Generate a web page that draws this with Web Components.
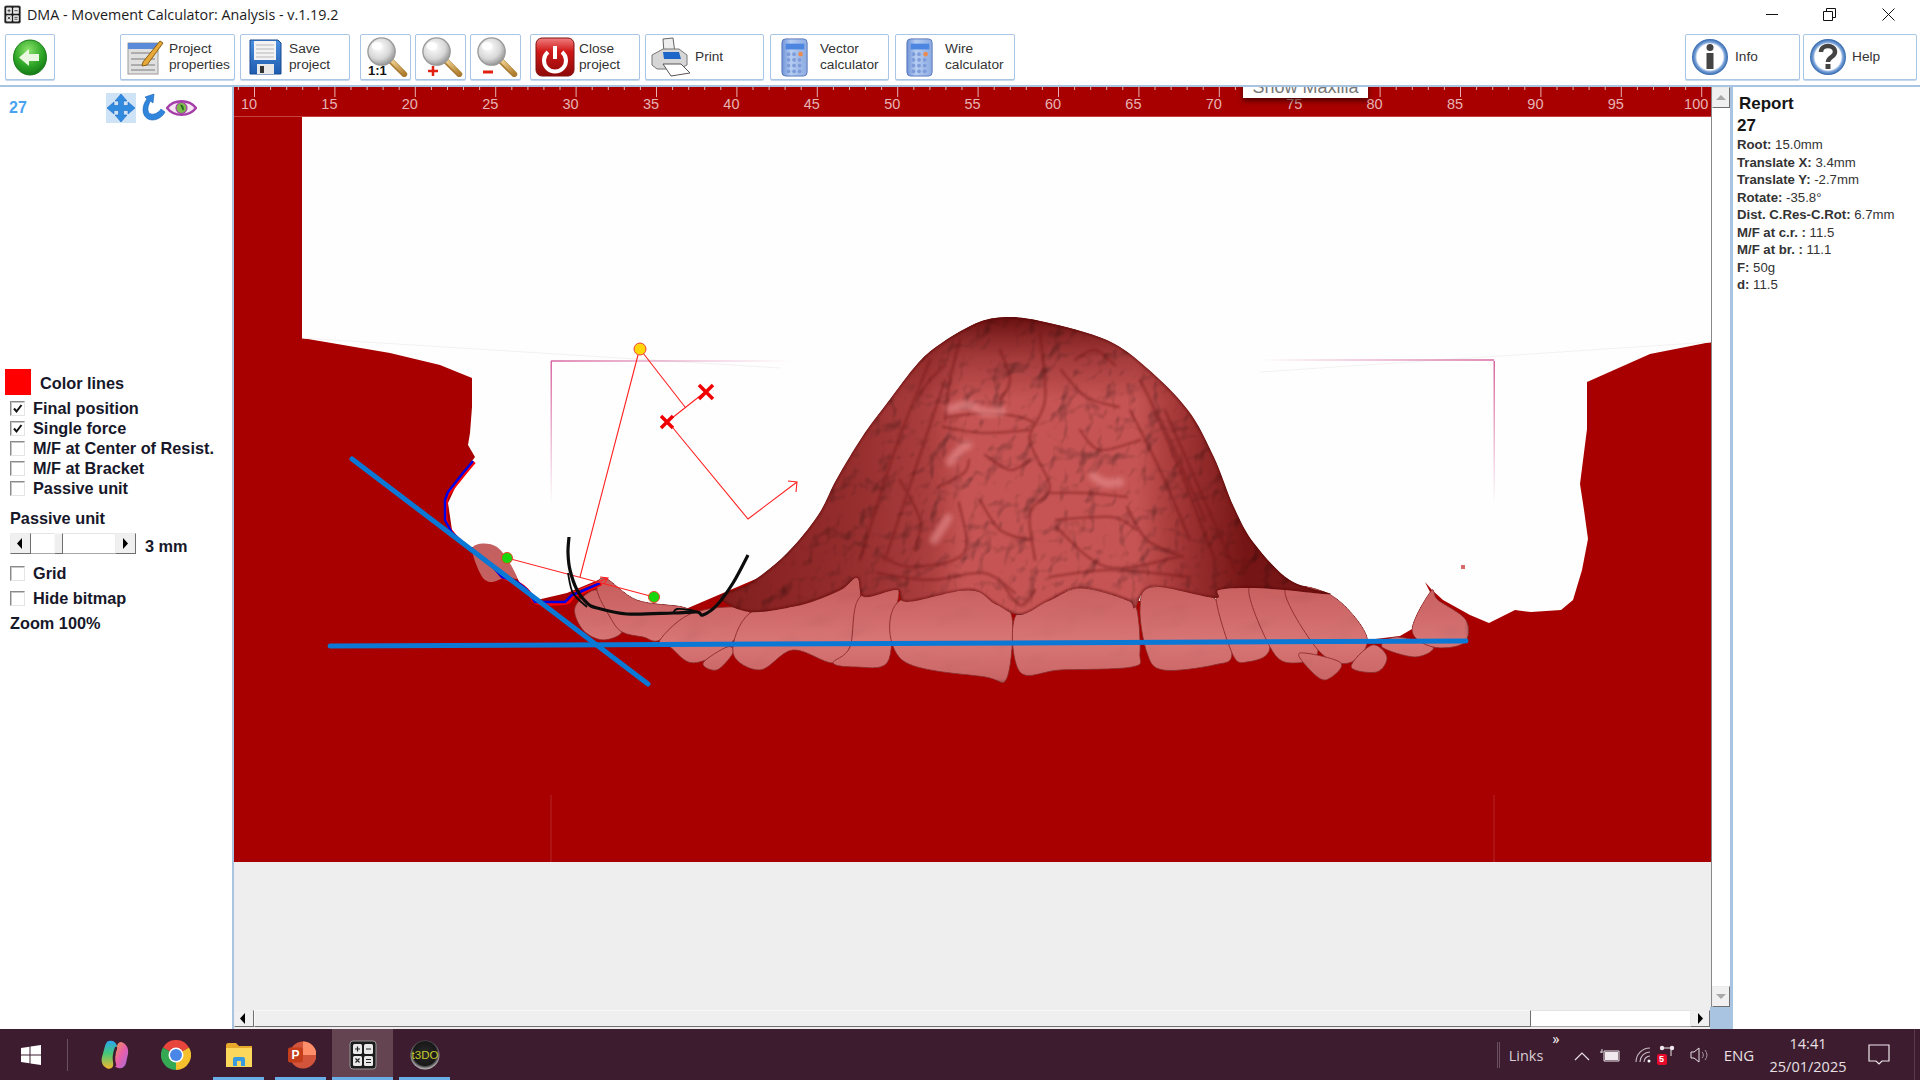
<!DOCTYPE html>
<html lang="en">
<head>
<meta charset="utf-8">
<title>DMA - Movement Calculator</title>
<style>
  html, body { margin: 0; height: 100%; overflow: hidden; background: #fff; }
  body { display: flex; flex-direction: column; width: 1920px; height: 1080px; font-family: "Liberation Sans", Arial, sans-serif; }
  svg { display: block; }
</style>
</head>
<body>
<svg width="0" height="0" style="position:absolute">
  <defs>
    <radialGradient id="glass" cx=".4" cy=".35" r=".7"><stop offset="0" stop-color="#fff"/><stop offset=".6" stop-color="#d8d8d8"/><stop offset="1" stop-color="#8c8c8c"/></radialGradient>
    <linearGradient id="handle" x1="0" y1="0" x2="1" y2="1"><stop offset="0" stop-color="#f0d090"/><stop offset="1" stop-color="#b08030"/></linearGradient>
    <radialGradient id="orb" cx=".45" cy=".3" r=".8"><stop offset="0" stop-color="#8be36a"/><stop offset=".55" stop-color="#2da526"/><stop offset="1" stop-color="#0b6a10"/></radialGradient>
    <linearGradient id="pwr" x1="0" y1="0" x2="0" y2="1"><stop offset="0" stop-color="#f08080"/><stop offset=".35" stop-color="#d01818"/><stop offset="1" stop-color="#8e0808"/></linearGradient>
    <linearGradient id="calc" x1="0" y1="0" x2="1" y2="0"><stop offset="0" stop-color="#6f93d8"/><stop offset=".35" stop-color="#b6cdf2"/><stop offset="1" stop-color="#8cabe2"/></linearGradient>
    <radialGradient id="ring" cx=".5" cy=".5" r=".5"><stop offset=".72" stop-color="#fff"/><stop offset=".82" stop-color="#7fa6da"/><stop offset="1" stop-color="#2f66ad"/></radialGradient>
    <linearGradient id="floppy" x1="0" y1="0" x2="0" y2="1"><stop offset="0" stop-color="#4a8fe0"/><stop offset="1" stop-color="#1e5cb0"/></linearGradient>
    <linearGradient id="copiL" x1="0" y1="0" x2="0" y2="1"><stop offset="0" stop-color="#2aa6ee"/><stop offset=".45" stop-color="#45c878"/><stop offset="1" stop-color="#f6b62c"/></linearGradient>
    <linearGradient id="copiR" x1="0" y1="0" x2="1" y2="1"><stop offset="0" stop-color="#f2a040"/><stop offset=".5" stop-color="#e85fa8"/><stop offset="1" stop-color="#a46be0"/></linearGradient>
    <radialGradient id="sphere" cx=".5" cy=".45" r=".55"><stop offset="0" stop-color="#2a2a2a"/><stop offset=".75" stop-color="#181818"/><stop offset=".9" stop-color="#8c8c8c"/><stop offset="1" stop-color="#c4c4c4"/></radialGradient>
    <symbol id="magnifier" viewBox="0 0 50 44">
      <path d="M29 26 L44 41" stroke="#a87a30" stroke-width="6.500" stroke-linecap="round"/>
      <path d="M30 26 L44 40" stroke="url(#handle)" stroke-width="4.500" stroke-linecap="round"/>
      <circle cx="19" cy="16" r="15" fill="url(#glass)" stroke="#9a9a9a" stroke-width="1.500"/>
      <ellipse cx="14" cy="10" rx="6" ry="4.500" fill="#fff" opacity=".9"/>
    </symbol>
    <symbol id="calculator" viewBox="0 0 30 42">
      <rect x="1" y="2" width="27" height="39" rx="4" fill="url(#calc)" stroke="#5676b8"/>
      <rect x="5" y="7" width="20" height="6" fill="#4d86e0"/>
      <g fill="#7d9bd8">
        <circle cx="8" cy="18" r="2"/><circle cx="14" cy="18" r="2"/><circle cx="8" cy="24" r="2"/><circle cx="14" cy="24" r="2"/><circle cx="20" cy="24" r="2"/><circle cx="8" cy="30" r="2"/><circle cx="14" cy="30" r="2"/><circle cx="20" cy="30" r="2"/><circle cx="8" cy="36" r="2"/><circle cx="14" cy="36" r="2"/><circle cx="20" cy="36" r="2"/>
      </g>
      <circle cx="21" cy="18" r="2.400" fill="#ec8a50"/>
    </symbol>
    <symbol id="calc-dark" viewBox="0 0 28 30">
      <rect x="1" y="1" width="26" height="28" rx="3" fill="#1b1b1b" stroke="#9a9a9a"/>
      <rect x="4" y="4" width="9" height="10" rx="1.500" fill="#e8e8e8"/><rect x="15" y="4" width="9" height="10" rx="1.500" fill="#e8e8e8"/>
      <rect x="4" y="16" width="9" height="10" rx="1.500" fill="#e8e8e8"/><rect x="15" y="16" width="9" height="10" rx="1.500" fill="#e8e8e8"/>
      <path d="M6 9h5M8.500 6.500v5M17 9h5M6.500 18.500l4 4M10.500 18.500l-4 4M17 19.500h5M17 22.500h5" stroke="#222" stroke-width="1.200"/>
    </symbol>
  </defs>
</svg>

<template id="tool-button-tpl">
  <style>
    :host { display: flex; align-items: center; box-sizing: border-box; height: 46px; padding-left: var(--pad, 5px); gap: var(--gap, 4px);
      background: #fff; border: 1px solid #a9c6e6; border-radius: 2px; box-shadow: 0 1px 0 #c6d8ec; color: #333;
      font: 13.700px/16px "Liberation Sans", Arial, sans-serif; flex: none; }
    ::slotted(svg) { flex: none; }
  </style>
  <slot name="icon"></slot><span><slot></slot></span>
</template>

<template id="check-row-tpl">
  <style>
    :host { display: flex; align-items: center; height: 20px; gap: 8px; padding-left: 10px; }
    i { box-sizing: border-box; width: 15px; height: 15px; flex: none; background: #fff; border: 1px solid; border-color: #8a8a8a #e4e4e4 #e4e4e4 #8a8a8a; box-shadow: inset 1px 1px 0 #c8c8c8; display: block; }
    svg { display: block; }
  </style>
  <i></i><span><slot></slot></span>
</template>

<template id="scroll-bar-tpl">
  <style>
    :host { display: flex; flex: none; background: #fff; box-sizing: border-box; }
    :host([dir-y]) { flex-direction: column; }
    .arrow { flex: none; display: flex; align-items: center; justify-content: center; background: #f0f0f0; box-sizing: border-box;
      border: 1px solid; border-color: #ececec #6f6f6f #6f6f6f #ececec; }
    .track { flex: 1 1 0; background: #fff; min-width: 0; min-height: 0; box-sizing: border-box; }
    :host(:not([dir-y])) .track { border-top: 1px solid #e4e4e4; border-bottom: 1px solid #a8a8a8; }
    .thumb { flex: none; background: #efefef; box-sizing: border-box; border: 1px solid; border-color: #f8f8f8 #6f6f6f #6f6f6f #f8f8f8; }
  </style>
  <div class="arrow a"></div><div class="track before"></div><div class="thumb"></div><div class="track after"></div><div class="arrow b"></div>
</template>

<template id="ruler-bar-tpl">
  <style>
    :host { display: block; height: 30px; background: #a80000; overflow: hidden; position: relative; flex: none; border-bottom: 1px solid #c84040; box-sizing: border-box; }
    text { font: 14.500px "Liberation Sans", Arial, sans-serif; fill: #e6b4b4; }
    .pop { position: absolute; left: 1009px; top: -9px; width: 125px; height: 20px; background: #fff; box-shadow: 0 3px 5px rgba(40,0,0,.7); color: #777; font: 18px/18px "Liberation Sans", Arial, sans-serif; text-align: center; white-space: nowrap; }
  </style>
  <svg width="1477" height="30"></svg>
  <div class="pop">Show Maxilla</div>
</template>

<template id="report-panel-tpl">
  <style>
    :host { display: block; box-sizing: border-box; padding: 7px 0 0 4px; background: #fff; color: #333; font: 13.200px/17.550px "Liberation Sans", Arial, sans-serif; }
    h2 { margin: 0 0 0 2px; font: bold 17px/20px "Liberation Sans", Arial, sans-serif; color: #151515; }
    h3 { margin: 2px 0 0; font: bold 17px/20px "Liberation Sans", Arial, sans-serif; color: #151515; }
    ::slotted(div) { white-space: nowrap; }
  </style>
  <h2>Report</h2><h3>27</h3><slot></slot>
</template>

<script>
class ToolButton extends HTMLElement {
  constructor() {
    super();
    this.attachShadow({ mode: "open" }).appendChild(document.getElementById("tool-button-tpl").content.cloneNode(true));
  }
}
customElements.define("tool-button", ToolButton);

class CheckRow extends HTMLElement {
  constructor() {
    super();
    this.attachShadow({ mode: "open" }).appendChild(document.getElementById("check-row-tpl").content.cloneNode(true));
  }
  connectedCallback() {
    if (this.hasAttribute("checked")) {
      this.shadowRoot.querySelector("i").innerHTML =
        '<svg width="13" height="13" viewBox="0 0 13 13"><path d="M3 6.500 L5.500 9.500 L10.500 3" fill="none" stroke="#111" stroke-width="2"/></svg>';
    }
  }
}
customElements.define("check-row", CheckRow);

class ScrollBar extends HTMLElement {
  constructor() {
    super();
    this.attachShadow({ mode: "open" }).appendChild(document.getElementById("scroll-bar-tpl").content.cloneNode(true));
  }
  connectedCallback() {
    const root = this.shadowRoot;
    const vertical = this.hasAttribute("dir-y");
    const size = Number(this.getAttribute("arrow") || 20);
    const thumb = root.querySelector(".thumb");
    const box = vertical ? "height" : "width";
    root.querySelectorAll(".arrow").forEach((a) => {
      a.style[box] = size + "px";
    });
    if (this.hasAttribute("thumb")) {
      const [before, len] = this.getAttribute("thumb").split(",").map(Number);
      root.querySelector(".before").style.flex = `0 0 ${before}px`;
      thumb.style[box] = len + "px";
    } else {
      thumb.style.display = "none";
      root.querySelector(".before").style.display = "none";
    }
    const fill = this.hasAttribute("disabled") ? "#a8a8a8" : "#000";
    const tri = vertical
      ? ['<path d="M1 6 L6 1 L11 6Z"/>', '<path d="M1 1 L11 1 L6 6Z"/>']
      : ['<path d="M6 0 L1 5.500 L6 11Z"/>', '<path d="M1 0 L6 5.500 L1 11Z"/>'];
    const w = vertical ? 12 : 7, h = vertical ? 7 : 11;
    root.querySelector(".a").innerHTML = `<svg width="${w}" height="${h}" fill="${fill}" style="display:block">${tri[0]}</svg>`;
    root.querySelector(".b").innerHTML = `<svg width="${w}" height="${h}" fill="${fill}" style="display:block">${tri[1]}</svg>`;
    if (!vertical) root.querySelector(".a").style.paddingRight = "3px";
  }
}
customElements.define("scroll-bar", ScrollBar);

class RulerBar extends HTMLElement {
  constructor() {
    super();
    this.attachShadow({ mode: "open" }).appendChild(document.getElementById("ruler-bar-tpl").content.cloneNode(true));
  }
  connectedCallback() {
    let marks = "";
    // one unit is 16.08px, the 10 mark sits at x = 20 in the canvas
    for (let mm = 9; mm <= 101; mm++) {
      const x = 20 + (mm - 10) * 16.08;
      const major = mm % 5 === 0;
      marks += `<rect x="${x.toFixed(1)}" y="0" width="1" height="${major ? 10 : 3}" fill="#e6b0b0"/>`;
      if (major) marks += `<text x="${(x - 5).toFixed(1)}" y="22" text-anchor="middle">${mm}</text>`;
    }
    this.shadowRoot.querySelector("svg").innerHTML = marks;
  }
}
customElements.define("ruler-bar", RulerBar);

class ReportPanel extends HTMLElement {
  constructor() {
    super();
    this.attachShadow({ mode: "open" }).appendChild(document.getElementById("report-panel-tpl").content.cloneNode(true));
  }
}
customElements.define("report-panel", ReportPanel);

class TaskItem extends HTMLElement {
  constructor() {
    super();
    this.attachShadow({ mode: "open" }).innerHTML = `
      <style>
        :host { display: flex; align-items: center; justify-content: center; flex: none; box-sizing: border-box; height: 51px; position: relative; }
        :host([open])::after { content: ""; position: absolute; left: 0; right: 0; bottom: 0; height: 3px; background: #6aaee8; }
        :host([active]) { background: #644451; }
      </style>
      <slot></slot>`;
  }
}
customElements.define("task-item", TaskItem);

class WindowBar extends HTMLElement {
  constructor() {
    super();
    this.attachShadow({ mode: "open" }).innerHTML = `
      <style>
        :host { display: flex; align-items: center; height: 34px; flex: none; padding-left: 3px; background: #fff; color: #1b1b1b; font: 14.300px "Open Sans", "Liberation Sans", sans-serif; }
        span { margin-left: 5px; flex: 1; position: relative; top: -3px; }
        .ctl { width: 58px; display: flex; justify-content: center; position: relative; top: -3px; }
        svg { display: block; }
        ::slotted(svg) { position: relative; top: -3px; }
      </style>
      <slot name="icon"></slot><span><slot></slot></span>
      <div class="ctl"><svg width="12" height="12"><path d="M0 6.500H12" stroke="#111"/></svg></div>
      <div class="ctl" style="left:-1px"><svg width="13" height="13"><path d="M.5 3.500h9v9h-9zM3.500 3.500v-3h9v9h-3" fill="none" stroke="#111"/></svg></div>
      <div class="ctl" style="margin-right:3px"><svg width="13" height="13"><path d="M.5 .5L12.500 12.500M12.500 .5L.5 12.500" stroke="#111"/></svg></div>`;
  }
}
customElements.define("window-bar", WindowBar);

class SidePanel extends HTMLElement {
  constructor() {
    super();
    this.attachShadow({ mode: "open" }).innerHTML = `
      <style>
        :host { display: block; box-sizing: border-box; width: 232px; flex: none; background: #fff; color: #17172a; font: bold 16.300px "Liberation Sans", Arial, sans-serif; }
        .num { height: 282px; box-sizing: border-box; padding: 6px 0 0 9px; display: flex; align-items: flex-start; color: #4aa3f0; font: bold 16px/30px "Liberation Sans", Arial, sans-serif; }
      </style>
      <div class="num"><slot name="head"></slot></div>
      <slot></slot>`;
  }
}
customElements.define("side-panel", SidePanel);

// Catmull-Rom through the traced points, the outlines below were read off the reference
function curve(pts, closed = true) {
  const n = pts.length;
  const at = (i) => (closed ? pts[(i + n) % n] : pts[Math.max(0, Math.min(n - 1, i))]);
  let d = `M${pts[0][0]} ${pts[0][1]}`;
  for (let i = 0; i < (closed ? n : n - 1); i++) {
    const [p0, p1, p2, p3] = [at(i - 1), at(i), at(i + 1), at(i + 2)];
    const c1 = [p1[0] + (p2[0] - p0[0]) / 6, p1[1] + (p2[1] - p0[1]) / 6];
    const c2 = [p2[0] - (p3[0] - p1[0]) / 6, p2[1] - (p3[1] - p1[1]) / 6];
    d += `C${c1[0].toFixed(1)} ${c1[1].toFixed(1)} ${c2[0].toFixed(1)} ${c2[1].toFixed(1)} ${p2[0]} ${p2[1]}`;
  }
  return d + (closed ? "Z" : "");
}
const poly = (pts) => "M" + pts.map((p) => p.join(" ")).join("L");

const WHITE = [[302,117],[1711,117],[1711,342],[1650,354],[1587,382],[1587,429],[1580,484],[1584,510],[1588,539],[1582,570],[1573,600],[1561,610],[1531,612],[1515,610],[1489,623],[1470,615],[1443,600],[1432,590],[1425,582],[1430,592],[1424,622],[1400,636],[1367,640],[1300,620],[800,560],[660,620],[620,600],[603,578],[567,593],[537,600],[520,583],[507,560],[487,547],[467,547],[452,530],[448,503],[460,477],[475,457],[468,445],[470,433],[472,407],[472,378],[440,365],[390,353],[302,338]];

const PALATE = [[720,597],[750,583],[787,553],[818,515],[836,480],[862,437],[887,403],[918,363],[943,342],[979,322],[1010,317],[1045,322],[1107,340],[1147,368],[1188,410],[1214,457],[1234,507],[1254,543],[1290,580],[1331,594],[1285,590],[1249,588],[1219,590],[1214,598],[1152,587],[1135,608],[1127,600],[1081,588],[1050,600],[1020,615],[994,603],[969,590],[907,602],[897,590],[864,597],[857,578],[840,590],[800,605],[750,612]];

const TEETH = [
  [[575,607],[597,590],[610,617],[622,632],[603,640],[583,630]],
  [[597,590],[605,578],[637,600],[683,607],[688,615],[660,640],[643,637],[622,632],[610,617]],
  [[660,640],[670,647],[693,663],[727,647],[750,613],[727,607],[688,615]],
  [[703,663],[727,647],[733,653],[717,670]],
  [[733,653],[750,613],[800,605],[840,590],[857,577],[860,600],[850,647],[833,663],[793,650],[760,670]],
  [[850,647],[859,598],[897,588],[893,620],[887,663],[856,667],[833,663]],
  [[897,603],[969,590],[994,603],[1012,617],[1007,678],[985,677],[902,660]],
  [[1015,617],[1050,600],[1081,588],[1127,600],[1137,610],[1140,653],[1132,667],[1061,670],[1020,672]],
  [[1140,608],[1152,587],[1214,598],[1232,653],[1214,665],[1163,670],[1147,653]],
  [[1216,590],[1249,588],[1270,647],[1247,662],[1232,653]],
  [[1249,588],[1285,590],[1318,650],[1290,663],[1270,647]],
  [[1285,590],[1331,595],[1367,637],[1349,663],[1318,650]],
  [[1300,653],[1341,663],[1326,680],[1310,670]],
  [[1372,645],[1387,657],[1377,672],[1351,667]],
  [[1397,637],[1433,647],[1415,657],[1382,647]],
  [[1431,591],[1438,600],[1466,620],[1464,643],[1433,647],[1412,630]],
];

const RIDGES_DARK = [
  [[948,417],[984,413],[1020,417],[1035,423]], [[1061,370],[1086,397],[1119,407]],
  [[1040,333],[1045,400],[1030,440],[1050,487],[1030,513],[1035,560]],
  [[938,487],[964,473],[969,460]], [[943,427],[984,433],[1030,430]],
  [[1050,493],[1086,493],[1127,497]], [[1056,520],[1112,517],[1137,530]],
  [[1127,507],[1147,540],[1183,557]], [[882,557],[913,567],[964,553],[959,503]],
  [[1056,527],[1107,567],[1178,557]], [[877,573],[930,580],[984,573],[1015,593]],
  [[1050,577],[1112,570],[1188,577]], [[915,400],[930,380],[945,365]],
  [[1000,350],[1010,380],[1000,400]], [[1075,360],[1095,350],[1115,365]],
  [[985,455],[1010,470],[1030,460]], [[980,500],[1000,530],[1030,540]],
  [[1080,430],[1100,450],[1140,440]], [[900,480],[920,520],[915,550]],
  [[1130,410],[1160,470],[1190,540]], [[1150,400],[1180,470],[1215,560]],
  [[1165,410],[1200,490],[1235,570]], [[930,360],[895,450],[860,560]],
  [[945,380],[915,470],[885,560]], [[1000,580],[1020,605],[1035,590]],
  [[1140,380],[1170,440],[1205,520]], [[960,340],[950,380],[945,420]],
];
const RIDGES_LIGHT = [
  [[950,409],[968,405],[985,412],[1002,411]], [[950,462],[960,450],[968,445]],
  [[1093,476],[1105,483],[1120,482]], [[934,540],[942,528],[948,518]],
];

class DentalCanvas extends HTMLElement {
  connectedCallback() {
    const root = this.attachShadow({ mode: "open" });
    const teeth = TEETH.map((t) => `<path d="${curve(t)}"/>`).join("");
    const dark = RIDGES_DARK.map((r) => `<path d="${curve(r, false)}"/>`).join("");
    const light = RIDGES_LIGHT.map((r) => `<path d="${curve(r, false)}"/>`).join("");
    const blue = [[473,461],[463,473],[448,492],[445,500],[445,520],[452,533],[463,543],[480,557],[493,567],[502,577],[517,582],[527,590],[535,602],[565,602],[572,595],[580,592],[600,583]];
    const bite1 = [[569,537],[568,553],[570,570],[577,590],[587,603],[597,608],[627,614],[673,613],[697,612],[703,615],[717,605],[733,583],[748,555]];
    const bite2 = [[568,573],[573,593],[587,607]];
    const bite3 = [[673,613],[677,609],[690,610],[697,612]];
    root.innerHTML = `
      <style>
        :host { display: block; width: 1477px; height: 745px; flex: none; background: #a80000; overflow: hidden; }
        svg { display: block; }
      </style>
      <svg width="1477" height="745" viewBox="234 117 1477 745">
        <defs>
          <filter id="relief" x="0" y="0" width="1" height="1" color-interpolation-filters="sRGB">
            <feTurbulence type="fractalNoise" baseFrequency="0.045 0.035" numOctaves="3" seed="11" result="n"/>
            <feGaussianBlur in="n" stdDeviation="1.200" result="nb"/>
            <feDiffuseLighting in="nb" surfaceScale="5" diffuseConstant="1.100" lighting-color="#fff" result="l"><feDistantLight azimuth="235" elevation="68"/></feDiffuseLighting>
            <feComposite in="SourceGraphic" in2="l" operator="arithmetic" k1="1.050" k2="0" k3="0" k4="0" result="m"/>
            <feComposite in="m" in2="SourceAlpha" operator="in"/>
          </filter>
          <filter id="soft" x="0" y="0" width="1" height="1" color-interpolation-filters="sRGB">
            <feTurbulence type="fractalNoise" baseFrequency="0.02 0.03" numOctaves="2" seed="4" result="n"/>
            <feGaussianBlur in="n" stdDeviation="2" result="nb"/>
            <feDiffuseLighting in="nb" surfaceScale="1.800" diffuseConstant="1.070" lighting-color="#fff" result="l"><feDistantLight azimuth="225" elevation="70"/></feDiffuseLighting>
            <feComposite in="SourceGraphic" in2="l" operator="arithmetic" k1="1.030" k2="0" k3="0" k4="0" result="m"/>
            <feComposite in="m" in2="SourceAlpha" operator="in"/>
          </filter>
          <filter id="b1"><feGaussianBlur stdDeviation="1.200"/></filter>
          <filter id="b3"><feGaussianBlur stdDeviation="2.500"/></filter>
          <linearGradient id="pal" gradientUnits="userSpaceOnUse" x1="720" y1="0" x2="1331" y2="0">
            <stop offset="0" stop-color="#7c1c1c"/><stop offset=".2" stop-color="#8d2a2a"/><stop offset=".34" stop-color="#a23a3a"/><stop offset=".4" stop-color="#bd5050"/><stop offset=".68" stop-color="#bd5050"/><stop offset=".75" stop-color="#9c3434"/><stop offset=".86" stop-color="#701414"/><stop offset="1" stop-color="#721616"/>
          </linearGradient>
          <linearGradient id="palTop" gradientUnits="userSpaceOnUse" x1="0" y1="317" x2="0" y2="400">
            <stop offset="0" stop-color="#5a0808" stop-opacity=".9"/><stop offset=".5" stop-color="#6e1414" stop-opacity=".4"/><stop offset="1" stop-color="#6e1414" stop-opacity="0"/>
          </linearGradient>
          <linearGradient id="tooth" gradientUnits="userSpaceOnUse" x1="0" y1="585" x2="0" y2="680">
            <stop offset="0" stop-color="#c25c5c"/><stop offset=".6" stop-color="#d27272"/><stop offset="1" stop-color="#c46262"/>
          </linearGradient>
          <linearGradient id="pinkL" gradientUnits="userSpaceOnUse" x1="551" y1="0" x2="790" y2="0"><stop offset="0" stop-color="#d868a0"/><stop offset="1" stop-color="#d868a0" stop-opacity="0"/></linearGradient>
          <linearGradient id="pinkR" gradientUnits="userSpaceOnUse" x1="1494" y1="0" x2="1260" y2="0"><stop offset="0" stop-color="#d868a0"/><stop offset="1" stop-color="#d868a0" stop-opacity="0"/></linearGradient>
          <linearGradient id="pinkV" gradientUnits="userSpaceOnUse" x1="0" y1="361" x2="0" y2="504"><stop offset="0" stop-color="#d868a0"/><stop offset="1" stop-color="#d868a0" stop-opacity="0"/></linearGradient>
          <clipPath id="palClip"><path d="${curve(PALATE)}"/></clipPath>
        </defs>
        <path d="${poly(WHITE)}Z" fill="#fefefe"/>
        <path d="M302 338 L780 368 M1260 372 L1711 342" stroke="#f2f2f2" stroke-width="1" fill="none"/>
        <path d="${poly([[551,361],[790,361]])}" stroke="url(#pinkL)" stroke-width="1.500"/>
        <path d="${poly([[1260,360],[1494,360]])}" stroke="url(#pinkR)" stroke-width="1.500"/>
        <rect x="550.500" y="361" width="1.500" height="143" fill="url(#pinkV)"/>
        <rect x="1493.500" y="361" width="1.500" height="143" fill="url(#pinkV)"/>
        <path d="M551 795V862M1494 795V862" stroke="#c85050" stroke-width="1" opacity=".45"/>

        <path d="${curve([[473,547],[497,547],[517,577],[507,577],[490,582],[480,573]])}" fill="#c46060"/>
        <g filter="url(#soft)" fill="url(#tooth)" stroke="#8f3030" stroke-width="1">${teeth}</g>

        <g filter="url(#relief)"><path d="${curve(PALATE)}" fill="url(#pal)"/><path d="${curve(PALATE)}" fill="url(#palTop)"/></g>
        <g clip-path="url(#palClip)">
          <g fill="none" stroke="#6e1414" stroke-width="2.500" stroke-linecap="round" opacity=".4" filter="url(#b1)">${dark}</g>
          <g fill="none" stroke="#e89090" stroke-width="9" stroke-linecap="round" opacity=".6" filter="url(#b3)">${light}</g>
          <path d="${curve(PALATE)}" fill="none" stroke="#5a0606" stroke-width="3" opacity=".5" filter="url(#b1)"/>
        </g>
        <rect x="1461" y="565" width="4" height="4" fill="#d66a6a"/>

        <!-- traced movement lines -->
        <path d="${curve(blue.map(([x, y]) => [x + 1.5, y + 1]), false)}" fill="none" stroke="#ff0000" stroke-width="3"/>
        <path d="${poly(blue)}" fill="none" stroke="#0000e6" stroke-width="2.500" stroke-linejoin="round"/>
        <g fill="none" stroke="#0a78d4" stroke-width="5" stroke-linecap="round">
          <path d="M352 459L648 684"/>
          <path d="M330 646L1466 641"/>
        </g>
        <g fill="none" stroke="#ff2020" stroke-width="1.100">
          <path d="M638 355L580 577M643 353L685 407M705 392L667 422M673 428L748 519L797 482M788 481L797 482L796 492"/>
          <path d="M507 558L654 597M573 592L608 578M600 577L608 578L604 584"/>
        </g>
        <g stroke="#f00000" stroke-width="3.500" fill="none">
          <path d="M699 385L713 399M713 385L699 399"/>
          <path d="M661 416L673 428M673 416L661 428"/>
        </g>
        <g fill="none" stroke="#0c0c0c" stroke-width="3.200" stroke-linejoin="round">
          <path d="${curve(bite1, false)}"/>
          <path d="${curve(bite2, false)}" stroke-width="1.800"/>
          <path d="${curve(bite3, false)}" stroke-width="1.800"/>
        </g>
        <circle cx="640" cy="349" r="6" fill="#ffd60a" stroke="#f04030"/>
        <circle cx="507" cy="558" r="5.500" fill="#18d80c" stroke="#f04030"/>
        <circle cx="654" cy="597" r="5.500" fill="#18d80c" stroke="#f04030"/>
      </svg>`;
  }
}
customElements.define("dental-canvas", DentalCanvas);

class TaskBar extends HTMLElement {
  constructor() {
    super();
    this.attachShadow({ mode: "open" }).innerHTML = `
      <style>
        :host { display: flex; align-items: center; height: 51px; flex: none; background: #3d1c2f; color: #e8e0e4; font: 14.500px "Open Sans", "Liberation Sans", sans-serif; }
        .apps, .tray { display: flex; align-items: center; height: 100%; }
        .tray { margin-left: auto; }
      </style>
      <div class="apps"><slot name="apps"></slot></div>
      <div class="tray"><slot name="tray"></slot></div>`;
  }
}
customElements.define("task-bar", TaskBar);
</script>

<window-bar>
  <svg slot="icon" width="19" height="19" viewBox="0 0 28 30"><use href="#calc-dark"/></svg>
  DMA - Movement Calculator: Analysis - v.1.19.2
</window-bar>

<div style="display:flex;height:51px;flex:none;padding-left:5px;background:#fff;box-sizing:border-box">
  <tool-button style="width:50px;--pad:6px">
    <svg slot="icon" width="36" height="37" viewBox="0 0 36 37"><ellipse cx="18" cy="18.500" rx="16.500" ry="17.500" fill="url(#orb)" stroke="#1a7a1a"/><path d="M7 18.500L17 10V15H27V22H17V27Z" fill="#e9f8df"/></svg>
  </tool-button>
  <tool-button style="width:115px;margin-left:65px;--pad:6px;--gap:4px">
    <svg slot="icon" width="38" height="35" viewBox="0 0 38 35"><rect x="1" y="3" width="30" height="31" fill="#e0e0e0" stroke="#9a9a9a"/><rect x="1" y="3" width="30" height="6" fill="#5b8ad8"/><path d="M4 13h24M4 19h24M4 25h24M4 30h24" stroke="#9c9c9c" stroke-width="1.500"/><path d="M16 22L33 1L36 3L20 25L15 26Z" fill="#e6a93a" stroke="#8a6010"/></svg>
    Project<br>properties
  </tool-button>
  <tool-button style="width:110px;margin-left:5px;--pad:7px;--gap:7px">
    <svg slot="icon" width="34" height="36" viewBox="0 0 34 36"><path d="M2 1H30L33 4V35H2Z" fill="url(#floppy)" stroke="#17498f"/><rect x="6" y="2" width="22" height="19" fill="#f3f3f3"/><path d="M8 6h18M8 10h18M8 14h18M8 18h18" stroke="#b8b8b8"/><rect x="9" y="25" width="17" height="10" fill="#e8e8e8"/><rect x="12" y="27" width="4" height="7" fill="#333"/></svg>
    Save<br>project
  </tool-button>
  <tool-button style="width:51px;margin-left:10px;--pad:3px">
    <span slot="icon" style="position:relative;display:block;width:46px;height:40px"><svg width="46" height="40"><use href="#magnifier"/></svg><b style="position:absolute;left:4px;top:27px;font:bold 13px/14px 'Liberation Sans',sans-serif;color:#111">1:1</b></span>
  </tool-button>
  <tool-button style="width:51px;margin-left:4px;--pad:3px">
    <span slot="icon" style="position:relative;display:block;width:46px;height:40px"><svg width="46" height="40"><use href="#magnifier"/><path d="M9 34H19M14 29V39" stroke="#e02010" stroke-width="2.500"/></svg></span>
  </tool-button>
  <tool-button style="width:51px;margin-left:4px;--pad:3px">
    <span slot="icon" style="position:relative;display:block;width:46px;height:40px"><svg width="46" height="40"><use href="#magnifier"/><path d="M9 35H19" stroke="#e02010" stroke-width="3"/></svg></span>
  </tool-button>
  <tool-button style="width:110px;margin-left:9px;--pad:4px;--gap:4px">
    <svg slot="icon" width="40" height="40" viewBox="0 0 40 40"><rect x="1" y="1" width="38" height="38" rx="6" fill="url(#pwr)" stroke="#801010"/><path d="M13 15A11 11 0 1 0 27 15" fill="none" stroke="#fff" stroke-width="4"/><path d="M20 9V22" stroke="#fff" stroke-width="4"/></svg>
    Close<br>project
  </tool-button>
  <tool-button style="width:119px;margin-left:5px;--pad:3px;--gap:4px">
    <svg slot="icon" width="42" height="40" viewBox="0 0 42 40"><path d="M14 2L24 1L26 16H15Z" fill="#eee" stroke="#666"/><path d="M3 18L14 12H30L38 18V28L30 32H8L3 28Z" fill="#d6d6d6" stroke="#777"/><path d="M14 15H30L32 22H15Z" fill="#1d67c8"/><path d="M14 27L32 27L41 36L22 39Z" fill="#fff" stroke="#555"/></svg>
    Print
  </tool-button>
  <tool-button style="width:119px;margin-left:6px;--pad:10px;--gap:11px">
    <svg slot="icon" width="28" height="40" viewBox="0 0 30 42" preserveAspectRatio="none"><use href="#calculator" width="30" height="42"/></svg>
    Vector<br>calculator
  </tool-button>
  <tool-button style="width:120px;margin-left:6px;--pad:10px;--gap:11px">
    <svg slot="icon" width="28" height="40" viewBox="0 0 30 42" preserveAspectRatio="none"><use href="#calculator" width="30" height="42"/></svg>
    Wire<br>calculator
  </tool-button>
  <tool-button style="width:115px;margin-left:auto;--pad:5px;--gap:6px">
    <svg slot="icon" width="38" height="38" viewBox="0 0 38 38"><circle cx="19" cy="19" r="18" fill="url(#ring)"/><circle cx="19" cy="9.500" r="3.500" fill="#444"/><rect x="15.500" y="15" width="7" height="16" fill="#444"/></svg>
    Info
  </tool-button>
  <tool-button style="width:114px;margin:0 3px;--pad:5px;--gap:5px">
    <svg slot="icon" width="38" height="38" viewBox="0 0 38 38"><circle cx="19" cy="19" r="18" fill="url(#ring)"/><path d="M12 14C12 6 26 6 26 14C26 19 19 19 19 24" fill="none" stroke="#444" stroke-width="4.500"/><rect x="16.500" y="26" width="5" height="5" fill="#444"/></svg>
    Help
  </tool-button>
</div>

<div style="height:2px;background:#a8c4e0;flex:none"></div>

<div style="display:flex;flex:1;min-height:0">
  <side-panel>
    <div slot="head" style="display:flex;align-items:center;height:30px;width:100%">
      <span style="width:97px">27</span>
      <span style="display:block;background:#cfe3f7;width:30px;height:30px">
        <svg width="30" height="30" viewBox="0 0 30 30"><path d="M15 1L21 8H17.500V12.500H22V9L29 15L22 21V17.500H17.500V22H21L15 29L9 22H12.500V17.500H8V21L1 15L8 9V12.500H12.500V8H9Z" fill="#2f8ae0" stroke="#1e6cc0" stroke-width=".6"/></svg>
      </span>
      <svg width="27" height="30" viewBox="0 0 27 30" style="margin-left:3px"><path d="M6 4L15 1L14 10L11.500 8C8 14 8 20 12 21C16 22 20 19 22 16L26 19C23 25 15 29 9 26C2 22 3 12 8 6Z" fill="#2f86dc" stroke="#1a62b0" stroke-width=".6"/></svg>
      <svg width="31" height="30" viewBox="0 0 31 30"><path d="M1 15C8 6 23 6 30 15C23 24 8 24 1 15Z" fill="#f6e6f4" stroke="#a63ea8" stroke-width="2.400"/><circle cx="15.500" cy="15" r="5.500" fill="#7dbb4a" stroke="#a63ea8" stroke-width="1.200"/><path d="M14 11.500A4 4 0 0 1 17 18Z" fill="#256a20"/></svg>
    </div>
    <div style="display:flex;align-items:center;gap:9px;padding-left:5px;height:26px">
      <span style="width:26px;height:26px;background:#ff0000;display:block"></span><span style="position:relative;top:1px">Color lines</span>
    </div>
    <check-row checked style="margin-top:3px">Final position</check-row>
    <check-row checked>Single force</check-row>
    <check-row>M/F at Center of Resist.</check-row>
    <check-row>M/F at Bracket</check-row>
    <check-row>Passive unit</check-row>
    <div style="padding-left:10px;height:20px;line-height:20px;margin-top:10px">Passive unit</div>
    <div style="display:flex;align-items:center;gap:9px;padding-left:10px;height:21px;margin-top:5px">
      <scroll-bar arrow="21" thumb="23,9" style="width:126px;height:21px"></scroll-bar><span style="position:relative;top:3px">3 mm</span>
    </div>
    <check-row style="margin-top:9px">Grid</check-row>
    <check-row style="margin-top:5px">Hide bitmap</check-row>
    <div style="padding-left:10px;height:20px;line-height:20px;margin-top:5px">Zoom 100%</div>
  </side-panel>
  <div style="width:2px;background:#a8c4e0;flex:none"></div>
  <div style="width:1496px;flex:none;display:flex;flex-direction:column">
    <div style="display:flex;height:920px;flex:none">
      <div style="width:1477px;display:flex;flex-direction:column;background:#eeeeee">
        <ruler-bar></ruler-bar>
        <dental-canvas></dental-canvas>
      </div>
      <scroll-bar dir-y disabled arrow="21" style="width:19px;height:920px;border-left:1px solid #888"></scroll-bar>
    </div>
    <div style="display:flex;height:22px;flex:none;background:#eeeeee">
      <scroll-bar arrow="20" thumb="0,1277" style="width:1476px;height:17px;margin-top:3px"></scroll-bar>
      <div style="flex:1;background:#a8c4e0"></div>
    </div>
  </div>
  <div style="width:3px;background:#a8c4e0;flex:none"></div>
  <report-panel style="flex:1">
    <div><b>Root:</b> 15.0mm</div>
    <div><b>Translate X:</b> 3.4mm</div>
    <div><b>Translate Y:</b> -2.7mm</div>
    <div><b>Rotate:</b> -35.8°</div>
    <div><b>Dist. C.Res-C.Rot:</b> 6.7mm</div>
    <div><b>M/F at c.r. :</b> 11.5</div>
    <div><b>M/F at br. :</b> 11.1</div>
    <div><b>F:</b> 50g</div>
    <div><b>d:</b> 11.5</div>
  </report-panel>
</div>

<task-bar>
  <task-item slot="apps" style="width:61px"><svg width="20" height="20" viewBox="0 0 20 20" fill="#fff"><path d="M0 3L8.500 1.800V9.500H0ZM9.500 1.600L20 0V9.500H9.500ZM0 10.500H8.500V18.200L0 17ZM9.500 10.500H20V20L9.500 18.400Z"/></svg></task-item>
  <div slot="apps" style="width:1px;height:32px;margin-left:6px;background:#6a5060;flex:none"></div>
  <task-item slot="apps" style="width:93px"><svg width="30" height="30" viewBox="0 0 30 30"><path d="M9 1C13 0 16 2 17 6L13 26C12 29 8 30 5 27C2 25 1 21 2 17L5 6C6 3 7 1 9 1Z" fill="url(#copiL)"/><path d="M21 2C26 3 29 8 28 14L26 23C25 27 22 29 18 28C15 27 13 25 14 22L17 6C18 3 19 2 21 2Z" fill="url(#copiR)"/><path d="M16 8C14 13 13 19 15 25" fill="none" stroke="#3d1c2f" stroke-width="2.500" stroke-linecap="round"/></svg></task-item>
  <task-item slot="apps" style="width:30px"><svg width="30" height="30" viewBox="0 0 30 30"><path d="M15 15L2 7.500A15 15 0 0 1 28 7.500Z" fill="#e8453c"/><path d="M15 15L28 7.500A15 15 0 0 1 15 30Z" fill="#f5c02c"/><path d="M15 15L15 30A15 15 0 0 1 2 7.500Z" fill="#34a853"/><circle cx="15" cy="15" r="7.500" fill="#fff"/><circle cx="15" cy="15" r="6" fill="#4a86e8"/></svg></task-item>
  <task-item slot="apps" open style="width:51px;margin-left:22px"><svg width="28" height="26" viewBox="0 0 28 26"><path d="M1 3C1 2 2 1 3 1H11L14 4H27V24H1Z" fill="#e6a92c"/><rect x="1" y="6" width="26" height="19" fill="#fbd75b"/><path d="M8 24V17A2 2 0 0 1 10 15H18A2 2 0 0 1 20 17V24H16V19H12V24Z" fill="#3a9ae0"/></svg></task-item>
  <task-item slot="apps" open style="width:51px;margin-left:11px"><svg width="30" height="30" viewBox="0 0 30 30"><circle cx="17" cy="15" r="13.500" fill="#d2543a"/><path d="M17 15V1.500A13.500 13.500 0 0 1 30.500 15Z" fill="#ff8f6b"/><rect x="2" y="7.500" width="15" height="15" rx="2" fill="#c43e1c"/><text x="5.500" y="19" font-family="Liberation Sans, sans-serif" font-weight="bold" font-size="12" fill="#fff">P</text></svg></task-item>
  <task-item slot="apps" open active style="width:61px;margin-left:6px"><svg width="28" height="30"><use href="#calc-dark"/></svg></task-item>
  <task-item slot="apps" open style="width:51px;margin-left:6px"><svg width="30" height="30" viewBox="0 0 30 30"><circle cx="15" cy="15" r="14.500" fill="url(#sphere)"/><text x="15" y="19" text-anchor="middle" font-family="Liberation Sans, sans-serif" font-size="11.500" fill="#c8c828">t3DO</text></svg></task-item>

  <div slot="tray" style="display:flex;align-items:center;height:100%">
    <div style="width:3px;height:26px;border-left:1px solid #6a5060;border-right:1px solid #6a5060;box-sizing:border-box;flex:none"></div>
    <span style="color:#d8cdd4;position:relative;top:1px;width:52px;text-align:center;flex:none">Links</span>
    <span style="width:8px;flex:none;display:block;align-self:flex-start;padding-top:3px;text-align:center;color:#fff;font-size:14px;line-height:14px">»</span>
    <svg width="16" height="9" viewBox="0 0 16 9" style="margin:3px 0 0 14px;flex:none"><path d="M1 8L8 1L15 8" fill="none" stroke="#e8e0e4" stroke-width="1.200"/></svg>
    <svg width="20" height="14" viewBox="0 0 20 14" style="margin-left:10px;flex:none"><path d="M0 4h2M2 1v4M4 3h15v10H4z" stroke="#f0e8ec" fill="none"/><rect x="5" y="4" width="13" height="8" fill="#f0e8ec"/></svg>
    <svg width="16" height="16" viewBox="0 0 16 16" style="margin-left:15px;flex:none"><g fill="none" stroke="#c8bcc4" stroke-width="1.100"><path d="M1 15A14 14 0 0 1 15 1"/><path d="M5 15A10 10 0 0 1 15 5"/><path d="M9 15A6 6 0 0 1 15 9"/></g><circle cx="14" cy="14" r="1.500" fill="#fff"/></svg>
    <span style="position:relative;display:block;width:20px;height:20px;margin-left:6px;flex:none"><svg width="20" height="20" viewBox="0 0 20 20"><circle cx="5" cy="3" r="2.200" fill="#f0e8ec"/><circle cx="15" cy="3" r="2.200" fill="#f0e8ec"/><path d="M5 3H15M14 5V11" stroke="#f0e8ec"/><rect x="0" y="9" width="10" height="11" rx="2" fill="#e60a2a"/></svg><b style="position:absolute;left:2px;top:9px;color:#fff;font:bold 9px/11px 'Liberation Sans',sans-serif">5</b></span>
    <svg width="20" height="16" viewBox="0 0 20 16" style="margin-left:13px;flex:none"><path d="M1 5H4L9 1V15L4 11H1Z" fill="none" stroke="#e8e0e4"/><path d="M12 5A4 4 0 0 1 12 11M15 3A8 8 0 0 1 15 13" fill="none" stroke="#a898a4"/></svg>
    <span style="width:50px;margin-left:4px;text-align:center;font-size:15px;flex:none">ENG</span>
    <div style="width:88px;text-align:center;line-height:23px;font-size:14.500px;flex:none;white-space:nowrap">14:41<br>25/01/2025</div>
    <svg width="22" height="22" viewBox="0 0 22 22" style="margin-left:16px;flex:none"><path d="M1 1H21V17H14L11 20L8 17H1Z" fill="none" stroke="#f0e8ec" stroke-width="1.200"/></svg>
    <div style="width:1px;height:51px;margin:0 5px 0 24px;background:#5c3a4e;flex:none"></div>
  </div>
</task-bar>
</body>
</html>
